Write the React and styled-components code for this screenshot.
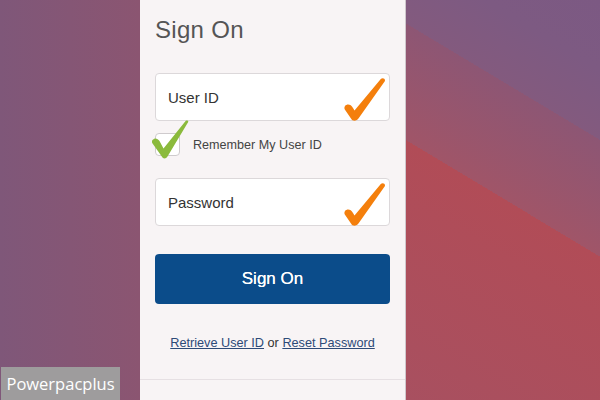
import React from 'react';
import styled, { createGlobalStyle } from 'styled-components';

const GlobalStyle = createGlobalStyle`
  html, body {
    margin: 0;
    padding: 0;
  }
  body {
    font-family: "Liberation Sans", Arial, sans-serif;
  }
`;

const Page = styled.div`
  position: relative;
  width: 600px;
  height: 400px;
  display: flex;
  overflow: hidden;
`;

const LeftBg = styled.div`
  width: 140px;
  flex-shrink: 0;
  background: linear-gradient(90deg, #7f5779 0%, #8b5571 100%);
`;

// diagonal bands on the right side
const RightBg = styled.div`
  flex: 1;
  background: linear-gradient(
    211deg,
    #7c5983 0px,
    #7d5a82 60px,
    #835a7e 120px,
    #8d5674 120px,
    #a05568 220px,
    #b14c57 220px,
    #a85060 100%
  );
`;

const Card = styled.div`
  width: 265px;
  flex-shrink: 0;
  background: #f8f4f5;
  border-right: 1px solid #cfc7cc;
  display: flex;
  flex-direction: column;
`;

const Body = styled.div`
  padding: 15px 15px 0 15px;
  display: flex;
  flex-direction: column;
`;

const Title = styled.h1`
  margin: 0;
  font-size: 24px;
  line-height: 30px;
  font-weight: normal;
  color: #555;
  letter-spacing: 0.3px;
`;

const Field = styled.div`
  position: relative;
  height: 46px;
  margin-top: ${(p) => p.$gap}px;
  background: #ffffff;
  border: 1px solid #dcd8da;
  border-radius: 4px;
  display: flex;
  align-items: center;
  padding-left: 12px;
  font-size: 15px;
  color: #333;
`;

const Tick = styled.svg`
  position: absolute;
  left: ${(p) => p.$left}px;
  top: ${(p) => p.$top}px;
  pointer-events: none;
`;

const RememberRow = styled.div`
  margin-top: 12px;
  display: flex;
  align-items: center;
  gap: 13px;
  font-size: 12.6px;
  color: #444;
`;

const Box = styled.div`
  position: relative;
  width: 23px;
  height: 21px;
  background: #fff;
  border: 1px solid #cfcbcd;
  border-radius: 4px;
`;

const Button = styled.button`
  margin-top: 28px;
  height: 50px;
  border: none;
  border-radius: 4px;
  background: #0b4c8a;
  color: #fff;
  font-family: "Liberation Sans", Arial, sans-serif;
  font-size: 17px;
  cursor: pointer;
  text-shadow: 0 0 0.4px #fff;
`;

const Links = styled.div`
  margin-top: 31px;
  text-align: center;
  font-size: 12.7px;
  line-height: 16px;
  color: #333;
`;

const Link = styled.a`
  color: #2d4a78;
  text-decoration: underline;
`;

const Divider = styled.div`
  margin-top: 28px;
  border-top: 1px solid #e6e0e3;
`;

const Watermark = styled.div`
  position: absolute;
  left: 1px;
  bottom: 0;
  width: 119px;
  height: 33px;
  background: #9e9c9d;
  color: #fff;
  font-family: "Open Sans", sans-serif;
  font-size: 16.5px;
  display: flex;
  align-items: center;
  justify-content: center;
`;

const OrangeTick = ({ left, top }) => (
  <Tick $left={left} $top={top} width="42" height="44" viewBox="0 0 42 44">
    <path
      d="M1 28 C3 25.5 7 26 9 30 L10.5 32.5 L37 0.8 C38.8 -0.8 41.8 0.8 40.8 3.2 L14.8 40 C12.5 43.5 8.5 43.5 7 40.5 L0.8 31.5 C0.2 30.5 0.3 29 1 28 Z"
      fill="#f47f0c"
    />
  </Tick>
);

const GreenTick = ({ left, top }) => (
  <Tick $left={left} $top={top} width="37" height="40" viewBox="0 0 37 40">
    <path
      d="M0.5 20 C2.5 17.5 5.5 18 7.5 21 L11.5 28.5 L33.8 0.8 C34.8 -0.2 36.8 0.8 36.2 2 L15.5 36.5 C14 39 11 39 9.8 36.5 L0.2 23 C-0.2 22 -0.1 20.8 0.5 20 Z"
      fill="#8bba3c"
    />
  </Tick>
);

const App = () => {
  return (
    <>
      <GlobalStyle />
      <Page>
        <LeftBg />
        <Card>
          <Body>
            <Title>Sign On</Title>
            <Field $gap={28}>
              User ID
              <OrangeTick left={188} top={4} />
            </Field>
            <RememberRow>
              <Box>
                <GreenTick left={-4} top={-14} />
              </Box>
              Remember My User ID
            </RememberRow>
            <Field $gap={22}>
              Password
              <OrangeTick left={188} top={4} />
            </Field>
            <Button>Sign On</Button>
            <Links>
              <Link>Retrieve User ID</Link> or <Link>Reset Password</Link>
            </Links>
          </Body>
          <Divider />
        </Card>
        <RightBg />
        <Watermark>Powerpacplus</Watermark>
      </Page>
    </>
  );
};

export default App;
